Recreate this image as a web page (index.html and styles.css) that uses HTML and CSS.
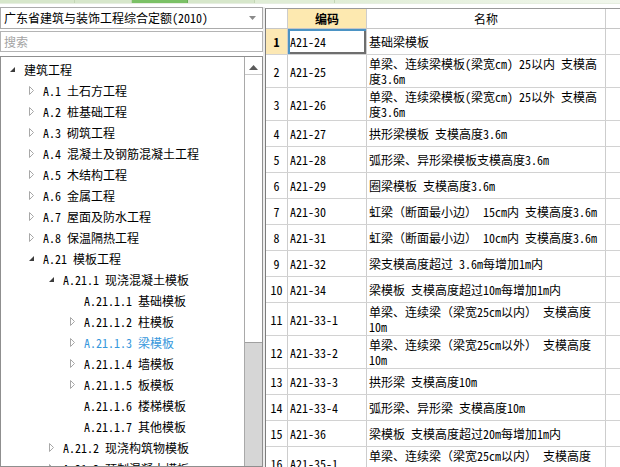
FILE: index.html
```html
<!DOCTYPE html>
<html lang="zh-CN">
<head>
<meta charset="utf-8">
<title>定额</title>
<link rel="stylesheet" href="styles.css">
</head>
<body>
<div class="topbar">
  <span class="seg w1"></span><span class="seg w2"></span><span class="seg w3 on"></span><span class="seg w4"></span><span class="seg w5"></span><span class="seg w6"></span>
</div>
<div class="main">
  <div class="left">
    <div class="combo">
      <span class="combo-text">广东省建筑与装饰工程综合定额(2010)</span>
      <svg class="combo-arrow" width="7" height="4" viewBox="0 0 7 4"><polygon points="0,0 7,0 3.5,4" fill="#8a8a8a"/></svg>
    </div>
    <div class="search">搜索</div>
    <div class="tree">
      <div class="tree-list">
        <div class="node l0"><span class="tg"><svg width="7" height="7" viewBox="0 0 7 7"><polygon points="6,1 6,6 1,6" fill="#3c3c3c"/></svg></span><span class="lbl">建筑工程</span></div>
        <div class="node l1"><span class="tg"><svg width="7" height="9" viewBox="0 0 7 9"><polygon points="1.5,0.5 5.5,4.5 1.5,8.5" fill="#fff" stroke="#a8a8a8"/></svg></span><span class="lbl">A.1 土石方工程</span></div>
        <div class="node l1"><span class="tg"><svg width="7" height="9" viewBox="0 0 7 9"><polygon points="1.5,0.5 5.5,4.5 1.5,8.5" fill="#fff" stroke="#a8a8a8"/></svg></span><span class="lbl">A.2 桩基础工程</span></div>
        <div class="node l1"><span class="tg"><svg width="7" height="9" viewBox="0 0 7 9"><polygon points="1.5,0.5 5.5,4.5 1.5,8.5" fill="#fff" stroke="#a8a8a8"/></svg></span><span class="lbl">A.3 砌筑工程</span></div>
        <div class="node l1"><span class="tg"><svg width="7" height="9" viewBox="0 0 7 9"><polygon points="1.5,0.5 5.5,4.5 1.5,8.5" fill="#fff" stroke="#a8a8a8"/></svg></span><span class="lbl">A.4 混凝土及钢筋混凝土工程</span></div>
        <div class="node l1"><span class="tg"><svg width="7" height="9" viewBox="0 0 7 9"><polygon points="1.5,0.5 5.5,4.5 1.5,8.5" fill="#fff" stroke="#a8a8a8"/></svg></span><span class="lbl">A.5 木结构工程</span></div>
        <div class="node l1"><span class="tg"><svg width="7" height="9" viewBox="0 0 7 9"><polygon points="1.5,0.5 5.5,4.5 1.5,8.5" fill="#fff" stroke="#a8a8a8"/></svg></span><span class="lbl">A.6 金属工程</span></div>
        <div class="node l1"><span class="tg"><svg width="7" height="9" viewBox="0 0 7 9"><polygon points="1.5,0.5 5.5,4.5 1.5,8.5" fill="#fff" stroke="#a8a8a8"/></svg></span><span class="lbl">A.7 屋面及防水工程</span></div>
        <div class="node l1"><span class="tg"><svg width="7" height="9" viewBox="0 0 7 9"><polygon points="1.5,0.5 5.5,4.5 1.5,8.5" fill="#fff" stroke="#a8a8a8"/></svg></span><span class="lbl">A.8 保温隔热工程</span></div>
        <div class="node l1"><span class="tg"><svg width="7" height="7" viewBox="0 0 7 7"><polygon points="6,1 6,6 1,6" fill="#3c3c3c"/></svg></span><span class="lbl">A.21 模板工程</span></div>
        <div class="node l2"><span class="tg"><svg width="7" height="7" viewBox="0 0 7 7"><polygon points="6,1 6,6 1,6" fill="#3c3c3c"/></svg></span><span class="lbl">A.21.1 现浇混凝土模板</span></div>
        <div class="node l3"><span class="tg"></span><span class="lbl">A.21.1.1 基础模板</span></div>
        <div class="node l3"><span class="tg"><svg width="7" height="9" viewBox="0 0 7 9"><polygon points="1.5,0.5 5.5,4.5 1.5,8.5" fill="#fff" stroke="#a8a8a8"/></svg></span><span class="lbl">A.21.1.2 柱模板</span></div>
        <div class="node l3 sel"><span class="tg"><svg width="7" height="9" viewBox="0 0 7 9"><polygon points="1.5,0.5 5.5,4.5 1.5,8.5" fill="#fff" stroke="#a8a8a8"/></svg></span><span class="lbl">A.21.1.3 梁模板</span></div>
        <div class="node l3"><span class="tg"><svg width="7" height="9" viewBox="0 0 7 9"><polygon points="1.5,0.5 5.5,4.5 1.5,8.5" fill="#fff" stroke="#a8a8a8"/></svg></span><span class="lbl">A.21.1.4 墙模板</span></div>
        <div class="node l3"><span class="tg"><svg width="7" height="9" viewBox="0 0 7 9"><polygon points="1.5,0.5 5.5,4.5 1.5,8.5" fill="#fff" stroke="#a8a8a8"/></svg></span><span class="lbl">A.21.1.5 板模板</span></div>
        <div class="node l3"><span class="tg"></span><span class="lbl">A.21.1.6 楼梯模板</span></div>
        <div class="node l3"><span class="tg"></span><span class="lbl">A.21.1.7 其他模板</span></div>
        <div class="node l2"><span class="tg"><svg width="7" height="9" viewBox="0 0 7 9"><polygon points="1.5,0.5 5.5,4.5 1.5,8.5" fill="#fff" stroke="#a8a8a8"/></svg></span><span class="lbl">A.21.2 现浇构筑物模板</span></div>
        <div class="node l2"><span class="tg"><svg width="7" height="9" viewBox="0 0 7 9"><polygon points="1.5,0.5 5.5,4.5 1.5,8.5" fill="#fff" stroke="#a8a8a8"/></svg></span><span class="lbl">A.21.3 预制混凝土模板</span></div>
      </div>
      <div class="vscroll">
        <div class="sb-up"><svg width="9" height="5" viewBox="0 0 9 5"><polygon points="0,5 9,5 4.5,0" fill="#5a5a5a"/></svg></div>
        <div class="sb-thumb"></div>
        <div class="sb-track"></div>
      </div>
    </div>
  </div>
  <div class="splitter"></div>
  <div class="grid">
    <div class="row head">
      <div class="c num"></div>
      <div class="c code hl"><b>编码</b></div>
      <div class="c name center">名称</div>
      <div class="c rest"></div>
    </div>
    <div class="row">
      <div class="c num cur"><b>1</b></div>
      <div class="c code active">A21-24</div>
      <div class="c name">基础梁模板</div>
      <div class="c rest"></div>
    </div>
    <div class="row">
      <div class="c num">2</div>
      <div class="c code">A21-25</div>
      <div class="c name">单梁、连续梁模板(梁宽cm) 25以内 支模高<br>度3.6m</div>
      <div class="c rest"></div>
    </div>
    <div class="row">
      <div class="c num">3</div>
      <div class="c code">A21-26</div>
      <div class="c name">单梁、连续梁模板(梁宽cm) 25以外 支模高<br>度3.6m</div>
      <div class="c rest"></div>
    </div>
    <div class="row">
      <div class="c num">4</div>
      <div class="c code">A21-27</div>
      <div class="c name">拱形梁模板 支模高度3.6m</div>
      <div class="c rest"></div>
    </div>
    <div class="row">
      <div class="c num">5</div>
      <div class="c code">A21-28</div>
      <div class="c name">弧形梁、异形梁模板支模高度3.6m</div>
      <div class="c rest"></div>
    </div>
    <div class="row">
      <div class="c num">6</div>
      <div class="c code">A21-29</div>
      <div class="c name">圈梁模板 支模高度3.6m</div>
      <div class="c rest"></div>
    </div>
    <div class="row">
      <div class="c num">7</div>
      <div class="c code">A21-30</div>
      <div class="c name">虹梁（断面最小边） 15cm内 支模高度3.6m</div>
      <div class="c rest"></div>
    </div>
    <div class="row">
      <div class="c num">8</div>
      <div class="c code">A21-31</div>
      <div class="c name">虹梁（断面最小边） 10cm内 支模高度3.6m</div>
      <div class="c rest"></div>
    </div>
    <div class="row">
      <div class="c num">9</div>
      <div class="c code">A21-32</div>
      <div class="c name">梁支模高度超过 3.6m每增加1m内</div>
      <div class="c rest"></div>
    </div>
    <div class="row">
      <div class="c num">10</div>
      <div class="c code">A21-34</div>
      <div class="c name">梁模板 支模高度超过10m每增加1m内</div>
      <div class="c rest"></div>
    </div>
    <div class="row">
      <div class="c num">11</div>
      <div class="c code">A21-33-1</div>
      <div class="c name">单梁、连续梁（梁宽25cm以内） 支模高度<br>10m</div>
      <div class="c rest"></div>
    </div>
    <div class="row">
      <div class="c num">12</div>
      <div class="c code">A21-33-2</div>
      <div class="c name">单梁、连续梁（梁宽25cm以外） 支模高度<br>10m</div>
      <div class="c rest"></div>
    </div>
    <div class="row">
      <div class="c num">13</div>
      <div class="c code">A21-33-3</div>
      <div class="c name">拱形梁 支模高度10m</div>
      <div class="c rest"></div>
    </div>
    <div class="row">
      <div class="c num">14</div>
      <div class="c code">A21-33-4</div>
      <div class="c name">弧形梁、异形梁 支模高度10m</div>
      <div class="c rest"></div>
    </div>
    <div class="row">
      <div class="c num">15</div>
      <div class="c code">A21-36</div>
      <div class="c name">梁模板 支模高度超过20m每增加1m内</div>
      <div class="c rest"></div>
    </div>
    <div class="row">
      <div class="c num">16</div>
      <div class="c code">A21-35-1</div>
      <div class="c name">单梁、连续梁（梁宽25cm以内） 支模高度<br>10m</div>
      <div class="c rest"></div>
    </div>
  </div>
</div>
</body>
</html>
```

FILE: styles.css
```css
* { box-sizing: border-box; }
html, body {
  margin: 0;
  padding: 0;
  background: #fff;
  overflow: hidden;
  height: 467px;
}
body {
  font-family: "Noto Sans Mono CJK SC", "Noto Sans CJK SC", "Liberation Mono", monospace;
  font-size: 12px;
  color: #000;
}

/* top strip */
.topbar {
  display: flex;
  height: 4px;
  border-bottom: 1px solid #e6eee0;
}
.seg {
  height: 3px;
  background: #d7e7cb;
  border-right: 1px solid #c3d6b5;
}
.seg.w1 { width: 75px; }
.seg.w2 { width: 57px; }
.seg.w3 { width: 56px; }
.seg.w4 { width: 67px; }
.seg.w5 { width: 80px; background: #e0edd6; }
.seg.w6 { flex: 1; border-right: 0; background: linear-gradient(to right, #e0edd6, #f1f7ec); }
.seg.on { background: #7bc166; border-right-color: #6aae56; }

.main {
  display: flex;
  height: 463px;
  padding-top: 3px;
}

/* left panel */
.left {
  width: 263px;
  display: flex;
  flex-direction: column;
}
.combo {
  height: 22px;
  border: 1px solid #ababab;
  display: flex;
  align-items: center;
  padding: 0 6px 0 3px;
  justify-content: space-between;
  white-space: nowrap;
}
.combo-text { line-height: 20px; }
.search {
  margin-top: 2px;
  height: 21px;
  border: 1px solid #b4b4b4;
  color: #a3a3a3;
  line-height: 19px;
  padding-left: 3px;
}
.tree {
  margin-top: 4px;
  flex: 1;
  display: flex;
  border: 1px solid #8f8f8f;
  overflow: hidden;
}
.tree-list {
  flex: 1;
  padding-top: 2px;
  overflow: hidden;
  white-space: nowrap;
}
.node {
  height: 21px;
  line-height: 21px;
  display: flex;
  align-items: center;
}
.node.l0 { padding-left: 5px; }
.node.l1 { padding-left: 24px; }
.node.l2 { padding-left: 44px; }
.node.l3 { padding-left: 65px; }
.tg {
  width: 14px;
  display: flex;
  align-items: center;
  justify-content: flex-start;
  padding-left: 3px;
}
.lbl { margin-left: 4px; }
.node.sel .lbl { color: #3798dc; }

.vscroll {
  width: 18px;
  display: flex;
  flex-direction: column;
  border-left: 1px solid #a9a9a9;
  padding-top: 3px;
}
.sb-up {
  height: 15px;
  display: flex;
  align-items: center;
  justify-content: center;
  border-bottom: 1px solid #c9c9c9;
}
.sb-thumb {
  height: 268px;
  background: #fff;
  border-bottom: 1px solid #a0a0a0;
}
.sb-track {
  flex: 1;
  background: #d6d6d6;
}

.splitter {
  width: 2px;
  background: #ededed;
}

/* grid */
.grid {
  flex: 1;
  margin-top: 1px;
  border-top: 1px solid #9a9a9a;
  border-left: 1px solid #7d7d7d;
  overflow: hidden;
}
.row {
  display: flex;
  min-height: 26px;
  border-bottom: 1px solid #d2d2d2;
  white-space: nowrap;
}
.row.head {
  min-height: 0;
  height: 20px;
  border-bottom: 1px solid #c6c6c6;
}
.c {
  display: flex;
  align-items: center;
  padding: 1px 3px 1px 2px;
  line-height: 15px;
  border-right: 1px solid #cdcdcd;
}
.c.num { width: 22px; justify-content: center; padding: 0; }
.c.code { width: 79px; }
.c.name { width: 239px; }
.c.rest { flex: 1; border-right: 0; }
.head .c { padding: 0; justify-content: center; }
.c.hl { background: #fde9b0; }
.c.cur { background: #fce8b4; }
.c.active {
  box-shadow: inset 2px 2px 0 #4b93c4, inset -2px -2px 0 #6e6e6e;
}
```
